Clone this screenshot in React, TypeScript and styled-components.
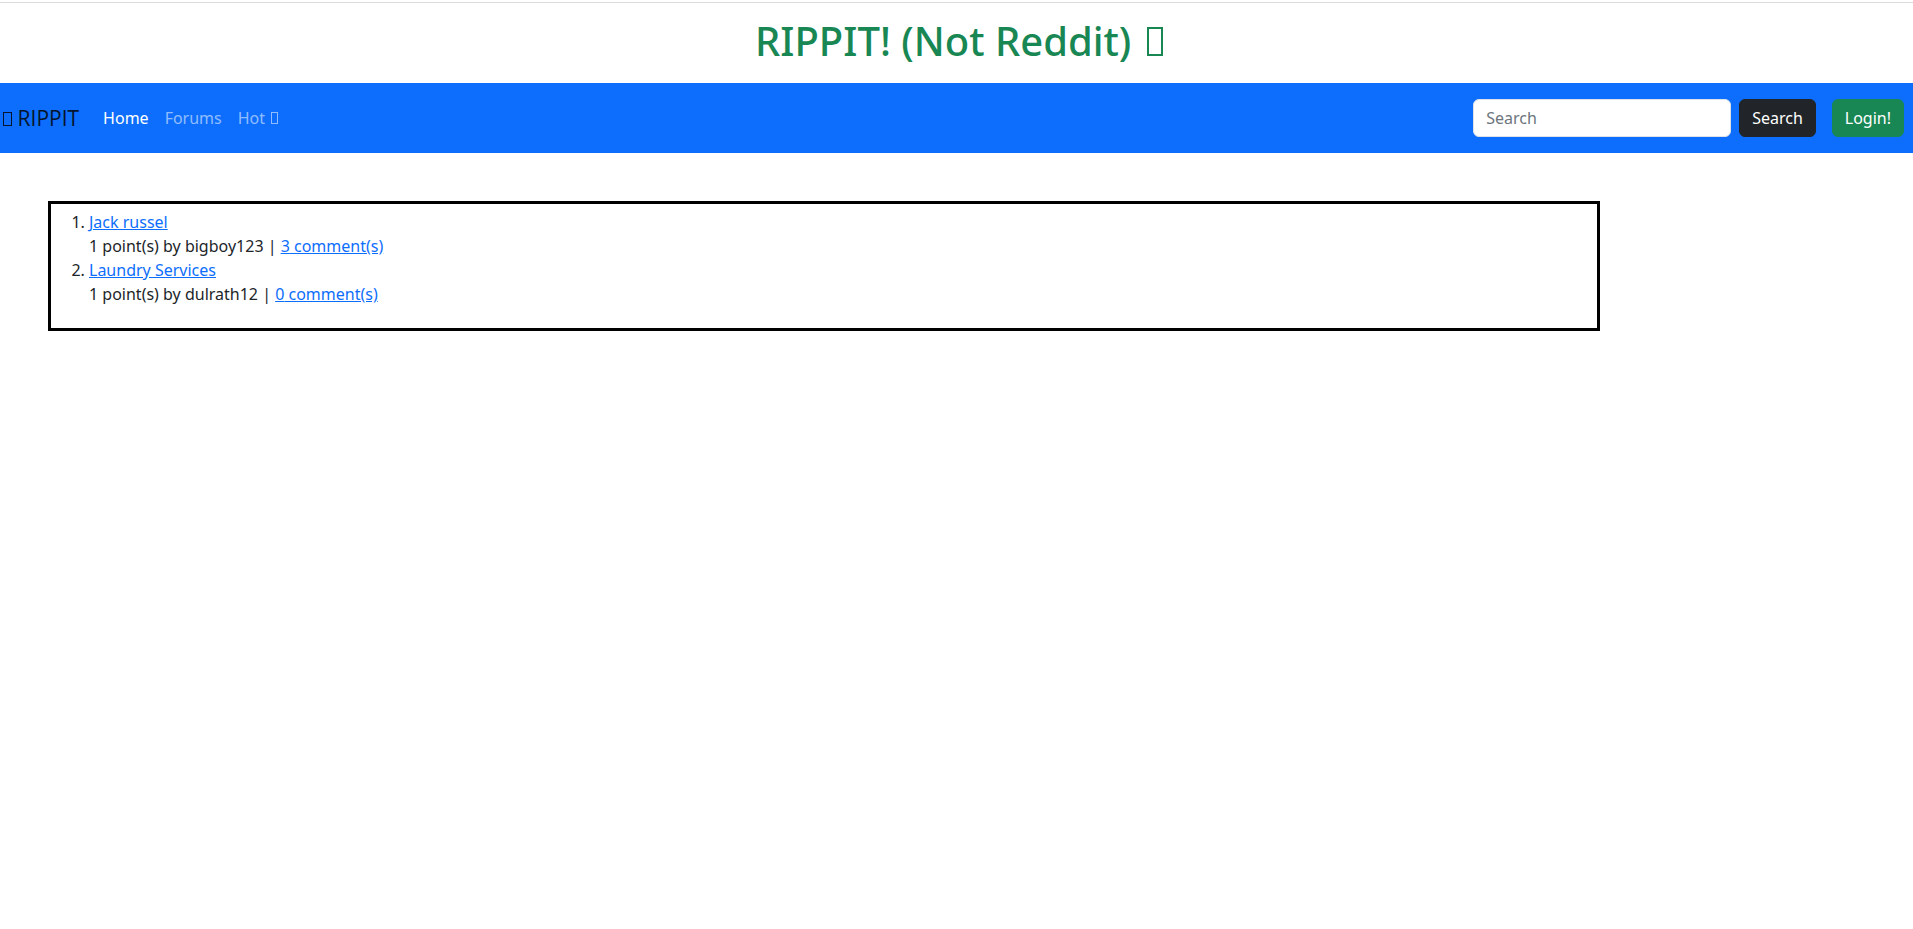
import React from "react";
import styled, { createGlobalStyle } from "styled-components";

const GlobalStyle = createGlobalStyle`
  * { box-sizing: border-box; }
  html, body { margin: 0; padding: 0; background: #fff; }
  body {
    font-family: "Noto Sans", "Open Sans", sans-serif;
    font-size: 16px;
    line-height: 1.5;
    color: #212529;
  }
`;

const TopRule = styled.div`
  margin-top: 2px;
  border-top: 1px solid #dcdcdc;
`;

const Title = styled.h1`
  margin: 14px 0 18px;
  padding-left: 7px;
  text-align: center;
  font-family: "Noto Sans", sans-serif;
  font-size: 40px;
  line-height: 1.2;
  font-weight: 500;
  color: #198754;
`;

/* missing-glyph box, as the emoji renders in the reference */
const Tofu = styled.span`
  display: inline-block;
  width: 0.42em;
  height: 0.72em;
  margin: 0 0.04em 0 0.12em;
  border: 0.055em solid currentColor;
  vertical-align: baseline;
`;

const Navbar = styled.nav`
  display: flex;
  align-items: center;
  justify-content: space-between;
  height: 70px;
  padding: 16px 9px 16px 0;
  background: #0d6efd;
`;

const Left = styled.div`
  display: flex;
  align-items: center;
`;

const Brand = styled.span`
  display: inline-flex;
  align-items: baseline;
  gap: 5px;
  font-family: "Open Sans", "Noto Sans", sans-serif;
  font-weight: 400;
  font-size: 20px;
  line-height: 30px;
  margin-left: 1px;
  margin-right: 16px;
  color: #06152e;
  white-space: nowrap;
  cursor: pointer;
`;

const BrandText = styled.span`
  font-size: 21px;
`;

const NavLink = styled.a<{ $active?: boolean }>`
  padding: 8px;
  font-family: "Noto Sans", sans-serif;
  font-size: 16px;
  color: ${(p) => (p.$active ? "#fff" : "rgba(255,255,255,0.55)")};
  text-decoration: none;
  white-space: nowrap;
`;

const Right = styled.div`
  display: flex;
  align-items: center;
`;

const SearchForm = styled.form`
  display: flex;
  align-items: center;
`;

const Input = styled.input`
  width: 258px;
  height: 38px;
  margin-right: 8px;
  padding: 6px 12px;
  font-family: "Noto Sans", sans-serif;
  font-size: 16px;
  color: #212529;
  background: #fff;
  border: 1px solid #dee2e6;
  border-radius: 6px;
  outline: none;
  &::placeholder { color: #6c757d; }
`;

const Button = styled.button<{ $variant: "dark" | "success" }>`
  height: 38px;
  padding: 6px 12px;
  font-family: "Noto Sans", sans-serif;
  font-size: 16px;
  line-height: 1.5;
  color: #fff;
  border: 1px solid ${(p) => (p.$variant === "dark" ? "#212529" : "#198754")};
  background: ${(p) => (p.$variant === "dark" ? "#212529" : "#198754")};
  border-radius: 6px;
  cursor: pointer;
`;

const LoginButton = styled(Button)`
  margin-left: 16px;
`;

const Main = styled.main`
  padding: 48px 0 0 48px;
`;

const PostBox = styled.div`
  width: 1552px;
  border: 3px solid #000;
  padding: 6px 6px 6px;
`;

const PostList = styled.ol`
  margin: 0 0 16px;
  padding-left: 32px;
`;

const PostItem = styled.li``;

const Link = styled.a`
  color: #0d6efd;
  text-decoration: underline;
`;

const Meta = styled.div``;

const posts = [
  { title: "Jack russel", points: 1, user: "bigboy123", comments: 3 },
  { title: "Laundry Services", points: 1, user: "dulrath12", comments: 0 },
];

export default function App() {
  return (
    <>
      <GlobalStyle />
      <TopRule />
      <Title>
        RIPPIT! (Not Reddit) <Tofu />
      </Title>
      <Navbar>
        <Left>
          <Brand>
            <Tofu />
            <BrandText>RIPPIT</BrandText>
          </Brand>
          <NavLink href="#" $active>Home</NavLink>
          <NavLink href="#">Forums</NavLink>
          <NavLink href="#">
            Hot <Tofu />
          </NavLink>
        </Left>
        <Right>
          <SearchForm onSubmit={(e) => e.preventDefault()}>
            <Input placeholder="Search" />
            <Button $variant="dark" type="submit">Search</Button>
          </SearchForm>
          <LoginButton $variant="success">Login!</LoginButton>
        </Right>
      </Navbar>
      <Main>
        <PostBox>
          <PostList>
            {posts.map((p) => (
              <PostItem key={p.title}>
                <Link href="#">{p.title}</Link>
                <Meta>
                  {p.points} point(s) by {p.user} | <Link href="#">{p.comments} comment(s)</Link>
                </Meta>
              </PostItem>
            ))}
          </PostList>
        </PostBox>
      </Main>
    </>
  );
}
